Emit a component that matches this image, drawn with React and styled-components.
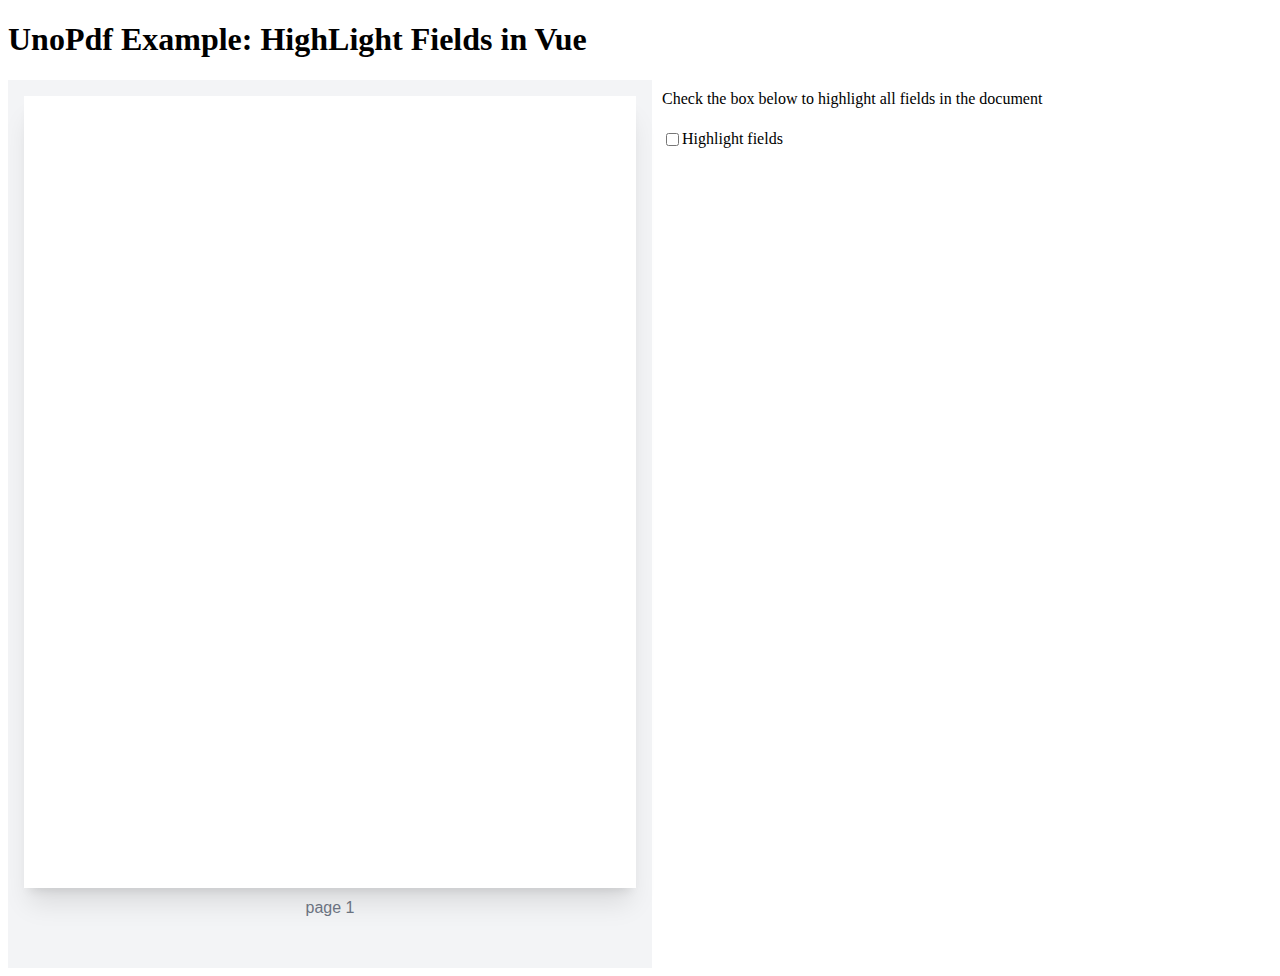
import React, { useState } from 'react';
import styled, { createGlobalStyle } from 'styled-components';

const GlobalStyle = createGlobalStyle`
  body {
    margin: 8px;
    font-family: "Liberation Serif", "Times New Roman", serif;
    background: #fff;
    color: #000;
  }
`;

const Title = styled.h1`
  margin: 13.44px 0 21.44px;
  font-size: 32px;
  font-weight: bold;
`;

const Layout = styled.div`
  display: flex;
  align-items: flex-start;
`;

const Viewer = styled.div`
  box-sizing: border-box;
  width: 644px;
  height: 888px;
  padding: 16px;
  background-color: #f3f4f6;
  display: flex;
  flex-direction: column;
  align-items: center;
`;

const Page = styled.div`
  width: 612px;
  height: 792px;
  flex-shrink: 0;
  background-color: #fff;
  box-shadow: 0 20px 25px -5px rgba(0, 0, 0, 0.1), 0 8px 10px -6px rgba(0, 0, 0, 0.1);
  outline: ${({ $highlight }) => ($highlight ? '2px solid #facc15' : 'none')};
`;

const PageLabel = styled.div`
  margin-top: 11px;
  font-family: "Liberation Sans", Arial, sans-serif;
  font-size: 16px;
  color: #6b7280;
`;

const Sidebar = styled.div`
  padding: 10px;
`;

const Hint = styled.p`
  margin: 0 0 22px;
  font-size: 16px;
`;

const CheckRow = styled.label`
  display: flex;
  align-items: center;
  font-size: 16px;

  input {
    margin: 3px 3px 3px 4px;
  }
`;

const App = () => {
  const [highlight, setHighlight] = useState(false);

  return (
    <>
      <GlobalStyle />
      <Title>UnoPdf Example: HighLight Fields in Vue</Title>
      <Layout>
        <Viewer>
          <Page $highlight={highlight} />
          <PageLabel>page 1</PageLabel>
        </Viewer>
        <Sidebar>
          <Hint>Check the box below to highlight all fields in the document</Hint>
          <CheckRow>
            <input
              type="checkbox"
              checked={highlight}
              onChange={(e) => setHighlight(e.target.checked)}
            />
            Highlight fields
          </CheckRow>
        </Sidebar>
      </Layout>
    </>
  );
};

export default App;
